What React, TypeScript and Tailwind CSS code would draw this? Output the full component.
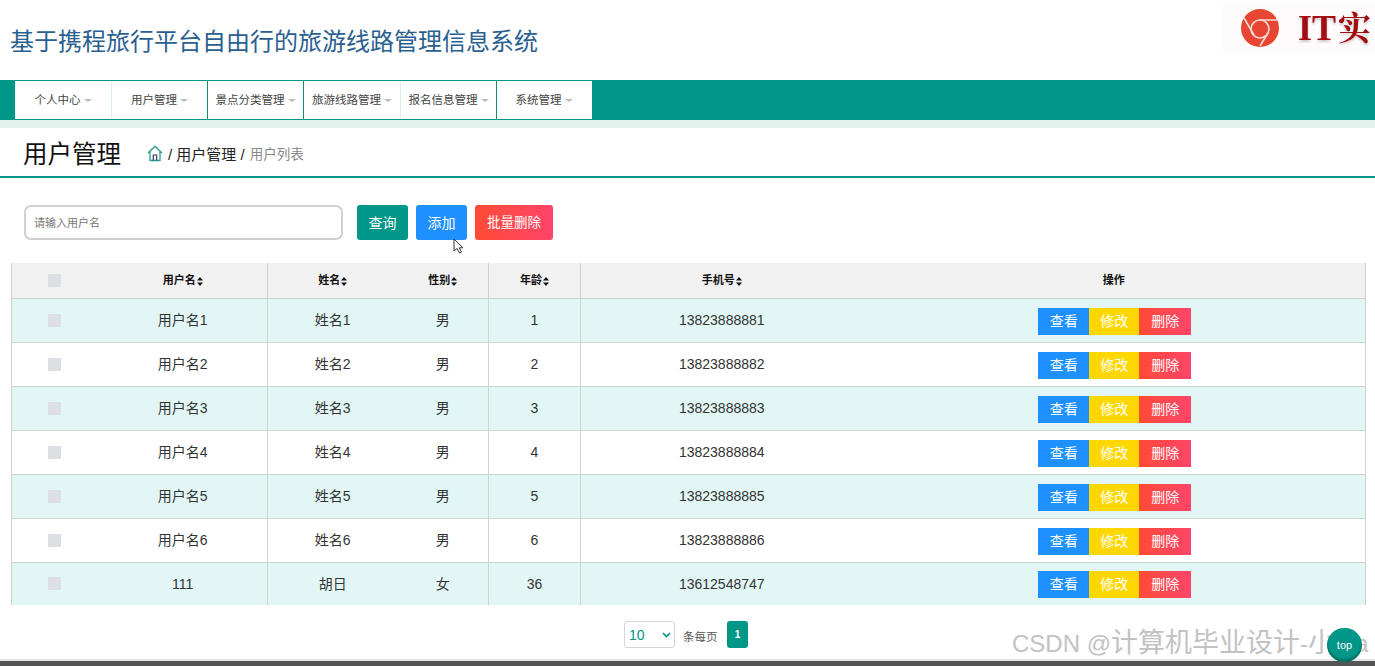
const cjk = "font-['Liberation_Sans','Noto_Sans_CJK_SC',sans-serif]";

const navItems = [
  { t: "个人中心", w: "w-[97px]", b: "border-r-[#d8f2f0]" },
  { t: "用户管理", w: "w-[96px]", b: "border-r-[#0f8a7e]" },
  { t: "景点分类管理", w: "w-[96px]", b: "border-r-[#0f8a7e]" },
  { t: "旅游线路管理", w: "w-[97px]", b: "border-r-[#d8f2f0]" },
  { t: "报名信息管理", w: "w-[96px]", b: "border-r-[#0f8a7e]" },
  { t: "系统管理", w: "w-[95px]", b: "border-r-transparent" },
];

const rows = [
  ["用户名1", "姓名1", "男", "1", "13823888881"],
  ["用户名2", "姓名2", "男", "2", "13823888882"],
  ["用户名3", "姓名3", "男", "3", "13823888883"],
  ["用户名4", "姓名4", "男", "4", "13823888884"],
  ["用户名5", "姓名5", "男", "5", "13823888885"],
  ["用户名6", "姓名6", "男", "6", "13823888886"],
  ["111", "胡日", "女", "36", "13612548747"],
];

function Sort() {
  return (
    <svg width="6" height="9" viewBox="0 0 6 9" className="inline-block ml-px">
      <path d="M3 0 6 3.6H0zM3 9 0 5.4h6z" fill="#111" />
    </svg>
  );
}

function Logo() {
  return (
    <div className="w-[153px] h-[50px] mt-[3px] bg-[#fdfbfb] flex items-center pl-[19px] gap-[19px] overflow-hidden shrink-0">
      <svg width="38" height="38" viewBox="0 0 38 38" className="shrink-0">
        <circle cx="19" cy="19" r="19" fill="#e74632" />
        <circle cx="19" cy="20" r="9" fill="none" stroke="#f6dcd6" strokeWidth="1.6" />
        <path d="M3 9 13 26M19 11H37M27 24 19 37" stroke="#f6dcd6" strokeWidth="1.6" fill="none" />
      </svg>
      <span className="font-['Liberation_Serif','Noto_Serif_CJK_SC','Noto_Sans_CJK_SC',serif] font-bold text-[36px] leading-none text-[#a30d12] whitespace-nowrap drop-shadow-[0_2px_1px_rgba(0,0,0,0.2)]">
        IT<span className="ml-[2px] text-[33px]">实</span>
      </span>
    </div>
  );
}

export default function App() {
  return (
    <div className={`${cjk} relative w-[1375px] h-[666px] overflow-hidden bg-white text-[#333] flex flex-col`}>
      <header className="h-[80px] shrink-0 flex justify-between">
        <h1 className="pl-[10px] pt-[25px] text-[24px] leading-[34px] font-normal text-[#2a6090] whitespace-nowrap">
          基于携程旅行平台自由行的旅游线路管理信息系统
        </h1>
        <Logo />
      </header>

      <nav className="h-[40px] shrink-0 bg-[#009688] pl-[15px] flex pt-px pb-px">
        {navItems.map((n) => (
          <div
            key={n.t}
            className={`${n.w} ${n.b} border-r bg-white flex items-center justify-center gap-[3px] pt-[2px] text-[11.5px] text-[#444] whitespace-nowrap`}
          >
            <span>{n.t}</span>
            <span className="w-0 h-0 border-x-[4px] border-x-transparent border-t-[3px] border-t-[#bbb] mb-[2px]" />
          </div>
        ))}
      </nav>
      <div className="h-[8px] shrink-0 bg-[#e3f1ed]" />

      <div className="h-[50px] shrink-0 border-b-2 border-[#009688] flex items-center pl-[23px] pt-[6px]">
        <span className="text-[24.5px] leading-none text-[#111] w-[124px]">用户管理</span>
        <svg width="16" height="17" viewBox="0 0 16 17" className="mb-[3px]" fill="none">
          <path d="M1 8 8 1.2 15 8M3 6.5V15.5H13V6.5" stroke="#2d9c92" strokeWidth="1.3" />
          <path d="M6.3 15.5V10H9.7V15.5" stroke="#336" strokeWidth="1.2" />
        </svg>
        <span className="ml-[5px] text-[15px] text-[#222]">/ 用户管理 /</span>
        <span className="ml-[5px] text-[13.5px] text-[#888]">用户列表</span>
      </div>

      <div className="h-[85px] shrink-0 pl-[24px] pt-[27px] flex items-start">
        <div className="w-[319px] h-[35px] border-2 border-[#d0d0d0] rounded-[7px] flex items-center pl-[8px] pt-px text-[11px] text-[#777]">
          请输入用户名
        </div>
        <button className="ml-[14px] w-[51px] h-[35px] rounded-[3px] bg-[#009688] text-white text-[14px] pt-px">查询</button>
        <button className="ml-[8px] w-[51px] h-[35px] rounded-[3px] bg-[#1e90ff] text-white text-[14px] pt-px">添加</button>
        <button className="ml-[8px] w-[78px] h-[35px] rounded-[3px] bg-gradient-to-r from-[#ff4b33] to-[#ff4468] text-white text-[13.5px] pt-px">批量删除</button>
      </div>

      <div className="pl-[11px] w-[1366px] shrink-0">
        <table className="w-[1355px] table-fixed border-collapse border-r border-l border-[#cfcfcf] text-center">
          <colgroup>
            <col className="w-[87px]" />
            <col className="w-[169px]" />
            <col className="w-[130px]" />
            <col className="w-[91px]" />
            <col className="w-[92px]" />
            <col className="w-[282px]" />
            <col />
          </colgroup>
          <thead>
            <tr className="h-[35px] bg-[#f1f1f1] text-[11px] text-[#111] font-bold">
              <th className="border-b border-[#c9d2d0] pr-[2px]">
                <span className="block w-[13px] h-[13px] mx-auto bg-[#dcdfe3]" />
              </th>
              <th className="border-b border-r border-[#c9d2d0]">用户名<Sort /></th>
              <th className="border-b border-[#c9d2d0]">姓名<Sort /></th>
              <th className="border-b border-r border-[#c9d2d0]">性别<Sort /></th>
              <th className="border-b border-r border-[#c9d2d0]">年龄<Sort /></th>
              <th className="border-b border-[#c9d2d0]">手机号<Sort /></th>
              <th className="border-b border-[#c9d2d0]">操作</th>
            </tr>
          </thead>
          <tbody>
            {rows.map((r, i) => (
              <tr
                key={i}
                className={`${i === 6 ? "h-[43px]" : "h-[44px]"} ${i % 2 === 0 ? "bg-[#e2f7f5]" : "bg-white"} text-[14px] text-[#333]`}
              >
                <td className={`pr-[2px] ${i < 6 ? "border-b border-[#cdd5d3]" : ""}`}>
                  <span className="block w-[13px] h-[13px] mx-auto bg-[#dcdfe3]" />
                </td>
                <td className={`border-r border-[#cdd5d3] pt-px ${i < 6 ? "border-b" : ""}`}>{r[0]}</td>
                <td className={`pt-px ${i < 6 ? "border-b border-[#cdd5d3]" : ""}`}>{r[1]}</td>
                <td className={`border-r border-[#cdd5d3] pt-px ${i < 6 ? "border-b" : ""}`}>{r[2]}</td>
                <td className={`border-r border-[#cdd5d3] pt-px ${i < 6 ? "border-b" : ""}`}>{r[3]}</td>
                <td className={`pt-px ${i < 6 ? "border-b border-[#cdd5d3]" : ""}`}>{r[4]}</td>
                <td className={i < 6 ? "border-b border-[#cdd5d3]" : ""}>
                  <div className="flex justify-center pt-[2px] pl-[2px] text-white text-[14px] leading-[27px]">
                    <span className="w-[51px] h-[27px] bg-[#1e90ff]">查看</span>
                    <span className="w-[50px] h-[27px] bg-[#ffd700]">修改</span>
                    <span className="w-[52px] h-[27px] bg-gradient-to-r from-[#ff4b33] to-[#ff4468]">删除</span>
                  </div>
                </td>
              </tr>
            ))}
          </tbody>
        </table>
      </div>

      <div className="flex-1 flex items-start justify-center pt-[16px] pr-[3px]">
        <div className="w-[51px] h-[27px] border border-[#d5d5d5] rounded-[3px] flex items-center justify-between pl-[4px] pr-[3px] text-[14px] text-[#009688]">
          <span className="pt-[2px]">10</span>
          <svg width="9" height="6" viewBox="0 0 9 6" fill="none">
            <path d="M1 1 4.5 4.5 8 1" stroke="#009688" strokeWidth="1.6" />
          </svg>
        </div>
        <span className="ml-[8px] text-[11.5px] text-[#555] leading-[33px] w-[44px]">条每页</span>
        <span className="w-[21px] h-[27px] rounded-[3px] bg-[#009688] text-white text-[10px] font-bold flex items-center justify-center">1</span>
      </div>

      <div className="h-[7px] shrink-0 bg-[#555] border-t-2 border-[#e5e5e5]" />

      <svg width="12" height="16" viewBox="0 0 12 16" className="absolute left-[453px] top-[238px]">
        <path d="M1 1V13L4 10.5 6.5 15 8.5 14 6.2 9.8H10Z" fill="#fff" stroke="#333" strokeWidth="1" />
      </svg>

      <div className="absolute left-[1012px] top-[627px] text-[24px] leading-[32px] text-[#c2c2c2] whitespace-nowrap">
        CSDN @<span className="text-[27px]">计算机毕业设计</span>-<span className="text-[27px]">小</span>ma
      </div>

      <div className="absolute left-[1327px] top-[628px] w-[35px] h-[34px] rounded-full bg-[#009688] shadow-[inset_0_-3px_2px_rgba(0,0,0,0.25)] text-white text-[11px] flex items-center justify-center">
        top
      </div>
    </div>
  );
}
